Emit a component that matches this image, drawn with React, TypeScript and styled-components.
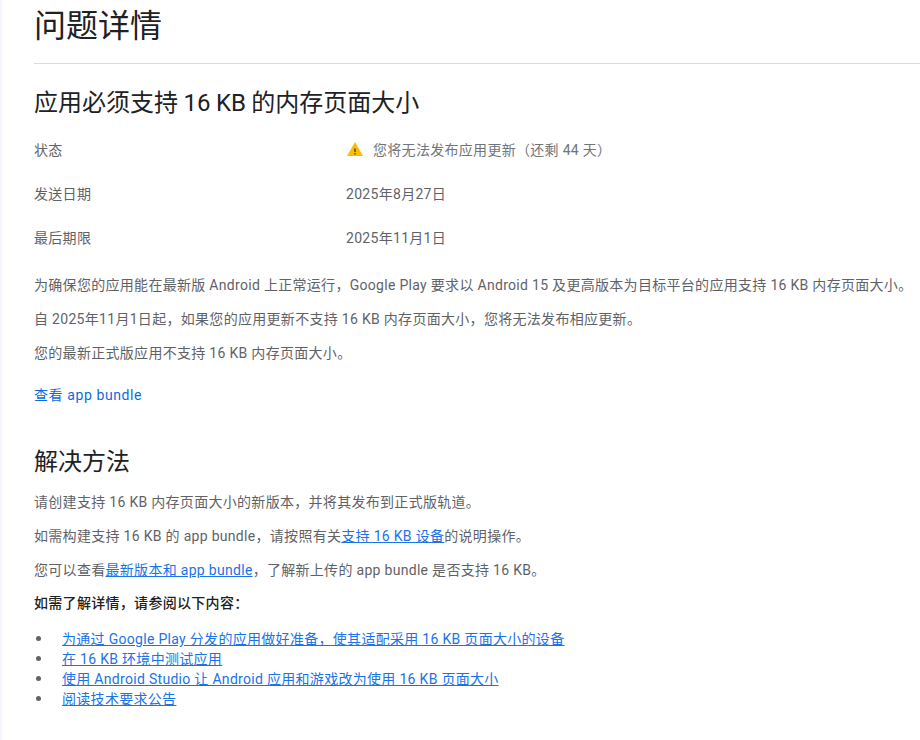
import React from "react";
import styled, { createGlobalStyle } from "styled-components";

const GlobalStyle = createGlobalStyle`
  html, body {
    margin: 0;
    padding: 0;
    background: #fff;
    overflow: hidden;
    font-family: Roboto, "Noto Sans CJK SC", sans-serif;
    font-size: 14px;
    letter-spacing: 0.3px;
    color: #5f6368;
  }
`;

const Page = styled.div`
  width: 920px;
  height: 740px;
  box-sizing: border-box;
  border-left: 2px solid #f6f5ff;
  padding-left: 32px;
  overflow: hidden;
`;

const Header = styled.header`
  height: 63px;
  border-bottom: 1px solid #dadce0;
`;

const PageTitle = styled.h1`
  margin: 0;
  font-size: 32px;
  font-weight: 400;
  line-height: 52px;
  letter-spacing: 0;
  color: #202124;
`;

const SectionTitle = styled.h2<{ $top: number }>`
  margin: ${(p) => p.$top}px 0 0;
  font-size: 24px;
  font-weight: 400;
  line-height: 32px;
  letter-spacing: 0;
  word-spacing: -0.5px;
  color: #202124;
`;

const Details = styled.div`
  margin-top: 8px;
  display: flex;
  flex-direction: column;
`;

const DetailRow = styled.div`
  height: 44px;
  display: grid;
  grid-template-columns: 312px 1fr;
  align-items: center;
`;

const Label = styled.div`
  color: #5f6368;
`;

const Value = styled.div`
  display: flex;
  align-items: center;
  color: #5f6368;
`;

const StatusText = styled.span`
  color: #70757a;
  margin-left: 9px;
`;

const Paragraph = styled.p<{ $top: number; $strong?: boolean }>`
  margin: ${(p) => p.$top}px 0 0;
  line-height: 20px;
  white-space: nowrap;
  color: ${(p) => (p.$strong ? "#202124" : "#5f6368")};
  font-weight: ${(p) => (p.$strong ? 500 : 400)};
`;

const Link = styled.a`
  color: #1a73e8;
  text-decoration: underline;
`;

const PlainLink = styled.a`
  display: block;
  margin-top: 22px;
  line-height: 20px;
  letter-spacing: 0.6px;
  color: #0b6bdc;
  font-weight: 400;
  text-decoration: none;
`;

const ResourceList = styled.ul`
  list-style: none;
  margin: 15px 0 0;
  padding: 0;
`;

const ResourceItem = styled.li`
  display: flex;
  align-items: center;
  height: 20px;
  &::before {
    content: "";
    width: 5px;
    height: 5px;
    border-radius: 50%;
    background: #5f6368;
    margin-left: 2px;
    margin-right: 21px;
  }
`;

const WarningIcon = () => (
  <svg width="18" height="16" viewBox="0 0 18 16" aria-hidden="true">
    <path d="M9 1 L17 15 H1 Z" fill="#fbbc04" />
    <rect x="8.3" y="7.5" width="1.4" height="3.5" fill="#3c4043" />
    <rect x="8.3" y="12" width="1.4" height="1.4" fill="#3c4043" />
  </svg>
);

const details = [
  { label: "发送日期", value: "2025年8月27日" },
  { label: "最后期限", value: "2025年11月1日" },
];

const resources = [
  "为通过 Google Play 分发的应用做好准备，使其适配采用 16 KB 页面大小的设备",
  "在 16 KB 环境中测试应用",
  "使用 Android Studio 让 Android 应用和游戏改为使用 16 KB 页面大小",
  "阅读技术要求公告",
];

export default function App() {
  return (
    <Page>
      <GlobalStyle />
      <Header>
        <PageTitle>问题详情</PageTitle>
      </Header>
      <SectionTitle $top={23}>应用必须支持 16 KB 的内存页面大小</SectionTitle>
      <Details>
        <DetailRow>
          <Label>状态</Label>
          <Value>
            <WarningIcon />
            <StatusText>您将无法发布应用更新（还剩 44 天）</StatusText>
          </Value>
        </DetailRow>
        {details.map((row) => (
          <DetailRow key={row.label}>
            <Label>{row.label}</Label>
            <Value>{row.value}</Value>
          </DetailRow>
        ))}
      </Details>
      <Paragraph $top={16}>
        为确保您的应用能在最新版 Android 上正常运行，Google Play 要求以 Android 15 及更高版本为目标平台的应用支持 16 KB 内存页面大小。
      </Paragraph>
      <Paragraph $top={14}>
        自 2025年11月1日起，如果您的应用更新不支持 16 KB 内存页面大小，您将无法发布相应更新。
      </Paragraph>
      <Paragraph $top={14}>您的最新正式版应用不支持 16 KB 内存页面大小。</Paragraph>
      <PlainLink>查看 app bundle</PlainLink>
      <SectionTitle $top={41}>解决方法</SectionTitle>
      <Paragraph $top={14}>请创建支持 16 KB 内存页面大小的新版本，并将其发布到正式版轨道。</Paragraph>
      <Paragraph $top={14}>
        如需构建支持 16 KB 的 app bundle，请按照有关<Link>支持 16 KB 设备</Link>的说明操作。
      </Paragraph>
      <Paragraph $top={14}>
        您可以查看<Link>最新版本和 app bundle</Link>，了解新上传的 app bundle 是否支持 16 KB。
      </Paragraph>
      <Paragraph $top={13} $strong>
        如需了解详情，请参阅以下内容：
      </Paragraph>
      <ResourceList>
        {resources.map((text) => (
          <ResourceItem key={text}>
            <Link>{text}</Link>
          </ResourceItem>
        ))}
      </ResourceList>
    </Page>
  );
}
